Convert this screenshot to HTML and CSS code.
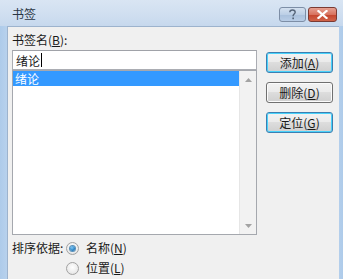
FILE: index.html
```html
<!DOCTYPE html>
<html lang="zh-CN">
<head>
    <meta charset="UTF-8">
    <title>书签</title>
    <link rel="stylesheet" href="styles.css">
</head>
<body>
    <div class="window">
        <div class="titlebar">
            <span class="title">书签</span>
            <div class="caption-buttons">
                <span class="cap-btn help">
                    <svg width="9" height="11" viewBox="0 0 9 11">
                        <path d="M1.8 3.2 C1.8 1.7 3 1 4.5 1 C6.1 1 7.2 1.9 7.2 3.2 C7.2 4.7 5.1 5.1 5.1 6.7 L5.1 7.3" fill="none" stroke="#56657a" stroke-width="1.4"/>
                        <rect x="4.3" y="8.5" width="1.7" height="1.7" fill="#56657a"/>
                    </svg>
                </span>
                <span class="cap-btn close">
                    <svg width="11" height="9" viewBox="0 0 11 9">
                        <path d="M1.5 1 L9.5 8 M9.5 1 L1.5 8" stroke="#fff" stroke-width="2.2" stroke-linecap="square"/>
                    </svg>
                </span>
            </div>
        </div>
        <div class="client">
            <div class="main">
                <div class="left">
                    <div class="label">书签名(<u>B</u>):</div>
                    <div class="name-input">绪论<span class="caret"></span></div>
                    <div class="listbox">
                        <div class="items">
                            <div class="item selected">绪论</div>
                        </div>
                        <div class="scrollbar">
                            <svg class="arrow" width="7" height="4" viewBox="0 0 7 4"><path d="M0 4 L3.5 0 L7 4 Z" fill="#a3a3a3"/></svg>
                            <svg class="arrow" width="7" height="4" viewBox="0 0 7 4"><path d="M0 0 L3.5 4 L7 0 Z" fill="#a3a3a3"/></svg>
                        </div>
                    </div>
                </div>
                <div class="buttons">
                    <button class="btn default">添加(<u>A</u>)</button>
                    <button class="btn">删除(<u>D</u>)</button>
                    <button class="btn default">定位(<u>G</u>)</button>
                </div>
            </div>
            <div class="sort">
                <div class="sort-label">排序依据:</div>
                <div class="radios">
                    <div class="radio-row"><span class="radio checked"></span>名称(<u>N</u>)</div>
                    <div class="radio-row"><span class="radio"></span>位置(<u>L</u>)</div>
                </div>
            </div>
        </div>
    </div>
</body>
</html>
```

FILE: styles.css
```css
body {
  margin: 0;
  padding: 0;
  font-family: "Noto Sans CJK SC", "Noto Sans", sans-serif;
  font-size: 12px;
  color: #1a1a1a;
  overflow: hidden;
}

.window {
  width: 343px;
  height: 279px;
  display: flex;
  flex-direction: column;
  background: linear-gradient(90deg, #aecbea 0%, #bcd4ee 3%, #c9dcf1 50%, #bcd4ee 97%, #aecbea 100%);
  overflow: hidden;
}

.titlebar {
  height: 26px;
  display: flex;
  justify-content: space-between;
  align-items: flex-start;
  padding-left: 12px;
  padding-right: 6px;
  background: linear-gradient(180deg, #d9e5f3 0%, #cfdef0 60%, #c6d8ed 100%);
  box-sizing: border-box;
}

.title {
  line-height: 16px;
  margin-top: 6px;
  color: #2a3644;
}

.caption-buttons {
  display: flex;
  gap: 2px;
  margin-top: 7px;
}

.cap-btn {
  height: 15px;
  display: flex;
  align-items: center;
  justify-content: center;
  border: 1px solid #7d8ea6;
  border-radius: 3px;
  box-sizing: border-box;
}

.help {
  width: 27px;
  background: linear-gradient(180deg, #d3e0ef 0%, #bccfe6 50%, #a9c0dc 51%, #b9cde6 100%);
}

.close {
  width: 29px;
  border-color: #7a3a33;
  background: linear-gradient(180deg, #e6a092 0%, #d8735f 50%, #c4432c 51%, #d0644a 100%);
}

.client {
  flex: 1;
  margin-left: 7px;
  margin-right: 4px;
  background: #f0f0f0;
  border-left: 1px solid #9db3cd;
  border-top: 1px solid #9db3cd;
  padding: 5px 0 0 4px;
}

.main {
  display: flex;
  gap: 9px;
}

.left {
  width: 245px;
  display: flex;
  flex-direction: column;
}

.label {
  line-height: 16px;
  margin-bottom: 2px;
}

.name-input {
  height: 20px;
  box-sizing: border-box;
  background: #fff;
  border: 1px solid #abadb3;
  border-top-color: #a0a2a8;
  padding-left: 3px;
  line-height: 17px;
  display: flex;
  align-items: center;
}

.caret {
  display: inline-block;
  width: 1px;
  height: 14px;
  background: #000;
  margin-left: 1px;
}

.listbox {
  height: 165px;
  box-sizing: border-box;
  background: #fff;
  border: 1px solid #a5a8ae;
  display: flex;
}

.items {
  flex: 1;
}

.item {
  height: 15px;
  line-height: 15px;
  padding-left: 2px;
}

.item.selected {
  background: #3399ff;
  color: #fff;
}

.scrollbar {
  width: 16px;
  background: #f2f2f2;
  border-left: 1px solid #e6e6e6;
  display: flex;
  flex-direction: column;
  justify-content: space-between;
  align-items: center;
  padding: 7px 0 6px;
}

.buttons {
  display: flex;
  flex-direction: column;
  gap: 9px;
  margin-top: 20px;
}

.btn {
  width: 67px;
  height: 21px;
  padding: 0;
  font-family: inherit;
  font-size: 12px;
  color: #1a1a1a;
  line-height: 17px;
  border: 1px solid #707070;
  border-radius: 3px;
  background: linear-gradient(180deg, #f2f2f2 0%, #ebebeb 45%, #dddddd 50%, #cfcfcf 100%);
  box-shadow: inset 0 0 0 1px #fbfbfb;
}

.btn.default {
  border-color: #3c7fb1;
  box-shadow: inset 0 0 0 1px #48d2fb;
}

.sort {
  display: flex;
  margin-top: 5px;
}

.sort-label {
  line-height: 16px;
  width: 54px;
}

.radios {
  display: flex;
  flex-direction: column;
  gap: 4px;
}

.radio-row {
  display: flex;
  align-items: center;
  line-height: 16px;
}

.radio {
  width: 13px;
  height: 13px;
  box-sizing: border-box;
  border-radius: 50%;
  border: 1px solid #a2a2a2;
  background: radial-gradient(circle at 50% 40%, #ffffff 0%, #ececec 60%, #d8d8d8 100%);
  margin-right: 7px;
  display: flex;
  align-items: center;
  justify-content: center;
}

.radio.checked::after {
  content: "";
  width: 5px;
  height: 5px;
  border-radius: 50%;
  background: radial-gradient(circle at 40% 35%, #7fc8f5 0%, #2a82c4 60%, #1a5e96 100%);
  box-shadow: 0 0 0 1px #5a90b8;
}
```
